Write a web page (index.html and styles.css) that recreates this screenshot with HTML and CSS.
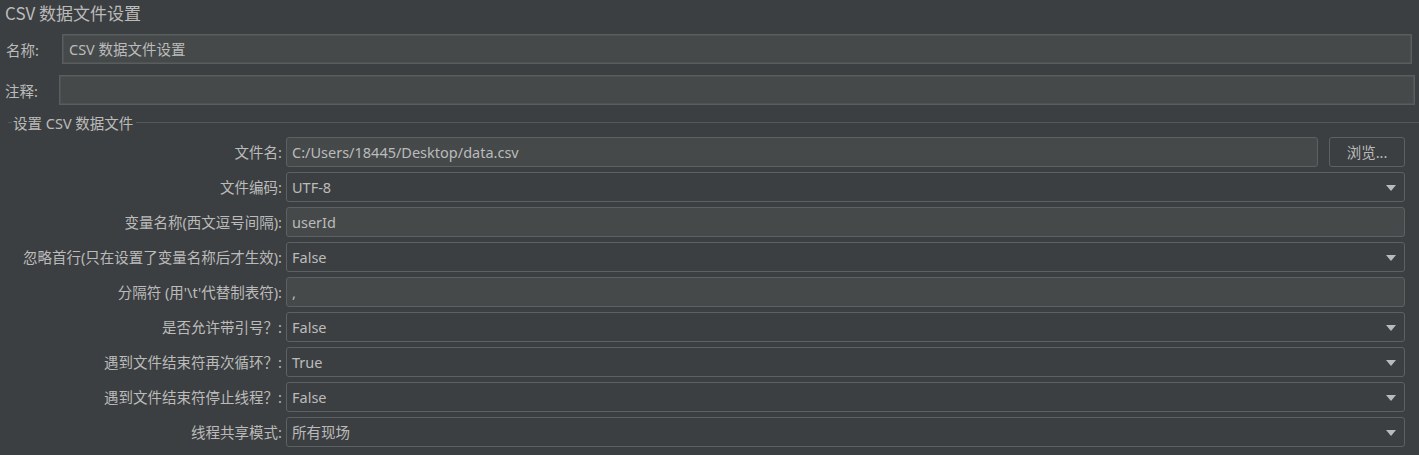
FILE: index.html
```html
<!DOCTYPE html>
<html lang="zh">
<head>
<meta charset="utf-8">
<link rel="stylesheet" href="styles.css">
</head>
<body>
<div class="page">
  <div class="title">CSV 数据文件设置</div>
  <div class="top-row name-row">
    <span class="top-label">名称:</span>
    <div class="tfield name-field">CSV 数据文件设置</div>
  </div>
  <div class="top-row comment-row">
    <span class="top-label">注释:</span>
    <div class="tfield comment-field"></div>
  </div>
  <div class="group">
    <div class="legend"><span class="lline short"></span><span class="ltext">设置 CSV 数据文件</span><span class="lline long"></span></div>
    <div class="form">
      <label>文件名:</label>
      <div class="file-wrap">
        <div class="field text">C:/Users/18445/Desktop/data.csv</div>
        <div class="btn">浏览...</div>
      </div>
      <label>文件编码:</label>
      <div class="field combo">UTF-8<span class="arrow"></span></div>
      <label>变量名称(西文逗号间隔):</label>
      <div class="field text">userId</div>
      <label>忽略首行(只在设置了变量名称后才生效):</label>
      <div class="field combo">False<span class="arrow"></span></div>
      <label>分隔符 (用'\t'代替制表符):</label>
      <div class="field text">,</div>
      <label>是否允许带引号？:</label>
      <div class="field combo">False<span class="arrow"></span></div>
      <label>遇到文件结束符再次循环？:</label>
      <div class="field combo">True<span class="arrow"></span></div>
      <label>遇到文件结束符停止线程？:</label>
      <div class="field combo">False<span class="arrow"></span></div>
      <label>线程共享模式:</label>
      <div class="field combo">所有现场<span class="arrow"></span></div>
    </div>
  </div>
</div>
</body>
</html>
```
FILE: styles.css
```css
html, body {
  margin: 0;
  padding: 0;
  background: #3c3f41;
}
body {
  width: 1419px;
  height: 455px;
  overflow: hidden;
  font-family: "Noto Sans", "Noto Sans CJK SC", sans-serif;
  color: #bbbbbb;
  font-size: 14.5px;
}
.page {
  display: flex;
  flex-direction: column;
}
.title {
  height: 34px;
  line-height: 26px;
  font-size: 17px;
  padding-left: 5px;
  color: #bbbbbb;
  font-family: "Noto Sans CJK SC", sans-serif;
}
.top-row {
  display: flex;
  align-items: center;
  height: 30px;
}
.comment-row {
  margin-top: 11px;
}
.top-label {
  padding-left: 6px;
  width: 62px;
  box-sizing: border-box;
}
.comment-row .top-label {
  padding-left: 5px;
  width: 59px;
}
.tfield {
  box-sizing: border-box;
  height: 30px;
  background: #45494a;
  border: 1px solid #5a5d5e;
  box-shadow: inset 0 0 0 1px #505354;
  padding-left: 6px;
  line-height: 28px;
}
.name-field {
  width: 1350px;
}
.comment-field {
  width: 1356px;
}
.group {
  display: flex;
  flex-direction: column;
}
.legend {
  display: flex;
  align-items: center;
  height: 20px;
  margin-top: 7px;
  margin-bottom: 5px;
}
.lline {
  height: 1px;
  background: #55585a;
}
.lline.short {
  width: 4px;
  margin-left: 8px;
}
.ltext {
  padding: 0 3px 0 1px;
}
.lline.long {
  flex: 1;
}
.form {
  display: grid;
  grid-template-columns: 282px 1fr;
  column-gap: 4px;
  row-gap: 5px;
  padding-right: 14px;
}
.form label {
  text-align: right;
  line-height: 30px;
  height: 30px;
  white-space: nowrap;
}
.file-wrap {
  display: flex;
  gap: 11px;
}
.file-wrap .field {
  flex: 1;
}
.field {
  box-sizing: border-box;
  height: 30px;
  border: 1px solid #5e6162;
  border-radius: 3px;
  padding-left: 5px;
  line-height: 28px;
  position: relative;
  white-space: nowrap;
}
.field.text {
  background: #45494a;
}
.field.combo {
  background: #3c3f41;
}
.arrow {
  position: absolute;
  right: 8px;
  top: 12px;
  width: 0;
  height: 0;
  border-left: 5px solid transparent;
  border-right: 5px solid transparent;
  border-top: 6px solid #bbbbbb;
}
.btn {
  box-sizing: border-box;
  width: 76px;
  height: 30px;
  border: 1px solid #5e6162;
  border-radius: 3px;
  background: #3c3f41;
  text-align: center;
  line-height: 28px;
}
```
